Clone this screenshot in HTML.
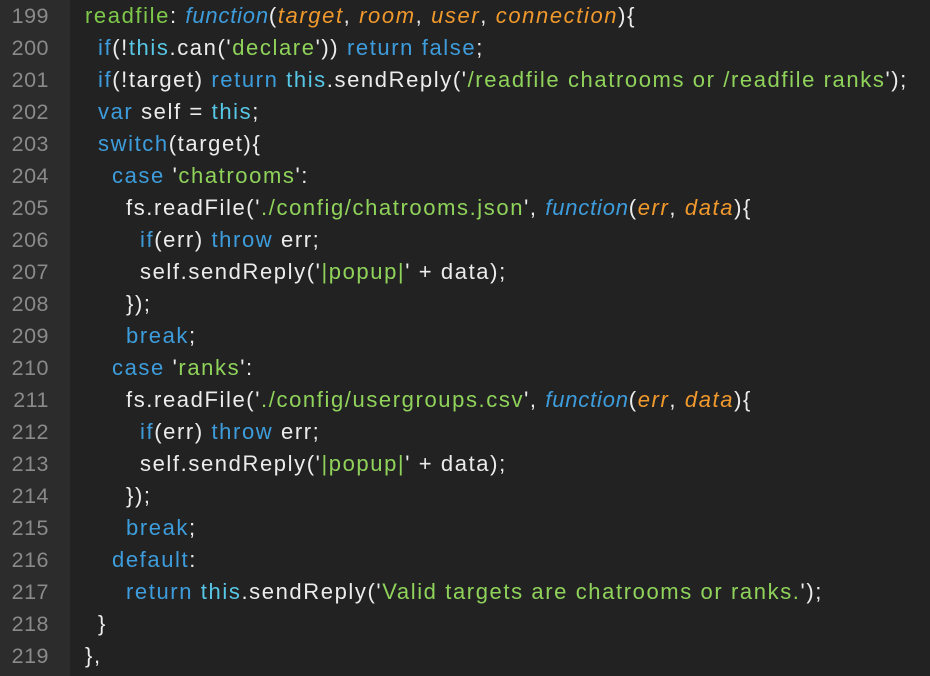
<!DOCTYPE html>
<html><head><meta charset="utf-8"><style>
html,body{margin:0;padding:0;width:930px;height:676px;overflow:hidden;background:#232223;}
.g{position:absolute;left:0;top:0;width:70px;height:676px;background:#2c2c2c;}
.r{height:32px;line-height:32px;white-space:pre;font-family:"Liberation Sans",sans-serif;}
.n{position:absolute;left:0;top:0;width:49px;text-align:right;color:#8a8a8a;font-size:21.5px;letter-spacing:0.5px;}
.c{position:absolute;left:85px;top:0;color:#ececec;font-size:22px;letter-spacing:1.6px;}
.k{color:#3d9ddc}.t{color:#57c7e6}.s{color:#8fd35a}.f{color:#3d9ddc;font-style:italic;letter-spacing:0.8px}.p{color:#f0992c;font-style:italic}.y{color:#7ec94a}
</style></head><body>
<div class="g"></div>
<div class="n">
<div class="r">199</div><div class="r">200</div><div class="r">201</div><div class="r">202</div><div class="r">203</div><div class="r">204</div><div class="r">205</div><div class="r">206</div><div class="r">207</div><div class="r">208</div><div class="r">209</div><div class="r">210</div><div class="r">211</div><div class="r">212</div><div class="r">213</div><div class="r">214</div><div class="r">215</div><div class="r">216</div><div class="r">217</div><div class="r">218</div><div class="r">219</div>
</div>
<div class="c">
<div class="r"><span class="y">readfile</span>: <span class="f">function</span>(<span class="p">target</span>, <span class="p">room</span>, <span class="p">user</span>, <span class="p">connection</span>){</div>
<div class="r" style="padding-left:13px"><span class="k">if</span>(!<span class="t">this</span>.can('<span class="s">declare</span>')) <span class="k">return</span> <span class="k">false</span>;</div>
<div class="r" style="padding-left:13px"><span class="k">if</span>(!target) <span class="k">return</span> <span class="t">this</span>.sendReply('<span class="s">/readfile chatrooms or /readfile ranks</span>');</div>
<div class="r" style="padding-left:13px"><span class="k">var</span> self = <span class="t">this</span>;</div>
<div class="r" style="padding-left:13px"><span class="k">switch</span>(target){</div>
<div class="r" style="padding-left:27px"><span class="k">case</span> '<span class="s">chatrooms</span>':</div>
<div class="r" style="padding-left:41px">fs.readFile('<span class="s">./config/chatrooms.json</span>', <span class="f">function</span>(<span class="p">err</span>, <span class="p">data</span>){</div>
<div class="r" style="padding-left:55px"><span class="k">if</span>(err) <span class="k">throw</span> err;</div>
<div class="r" style="padding-left:55px">self.sendReply('<span class="s">|popup|</span>' + data);</div>
<div class="r" style="padding-left:41px">});</div>
<div class="r" style="padding-left:41px"><span class="k">break</span>;</div>
<div class="r" style="padding-left:27px"><span class="k">case</span> '<span class="s">ranks</span>':</div>
<div class="r" style="padding-left:41px">fs.readFile('<span class="s">./config/usergroups.csv</span>', <span class="f">function</span>(<span class="p">err</span>, <span class="p">data</span>){</div>
<div class="r" style="padding-left:55px"><span class="k">if</span>(err) <span class="k">throw</span> err;</div>
<div class="r" style="padding-left:55px">self.sendReply('<span class="s">|popup|</span>' + data);</div>
<div class="r" style="padding-left:41px">});</div>
<div class="r" style="padding-left:41px"><span class="k">break</span>;</div>
<div class="r" style="padding-left:27px"><span class="k">default</span>:</div>
<div class="r" style="padding-left:41px"><span class="k">return</span> <span class="t">this</span>.sendReply('<span class="s">Valid targets are chatrooms or ranks.</span>');</div>
<div class="r" style="padding-left:13px">}</div>
<div class="r">},</div>
</div>
</body></html>
